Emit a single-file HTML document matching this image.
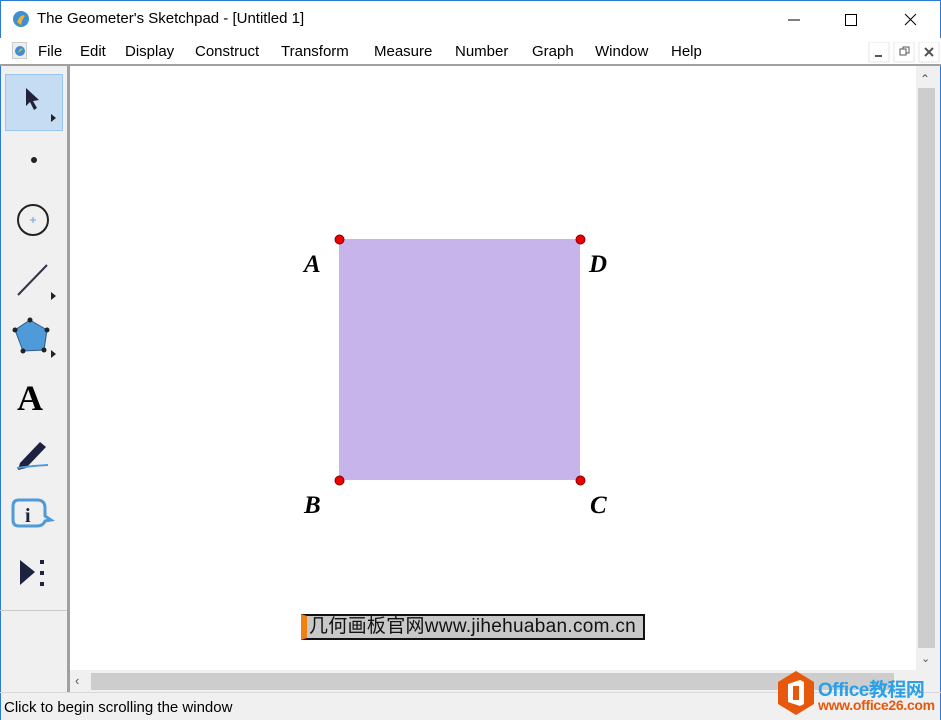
<!DOCTYPE html>
<html><head><meta charset="utf-8"><style>
*{margin:0;padding:0;box-sizing:border-box}
body{width:941px;height:720px;overflow:hidden;background:#f0f0f0;font-family:"Liberation Sans","Noto Sans CJK SC",sans-serif;position:relative}
.abs{position:absolute}
.menu span{position:absolute;top:43px;font-size:15px;color:#000}
</style></head><body>
<div class="abs" style="left:0;top:0;width:941px;height:38px;background:#fff"></div>
<div class="abs" style="left:0;top:0;width:1px;height:720px;background:#2b7bd5"></div>
<div class="abs" style="left:940px;top:0;width:1px;height:720px;background:#2b7bd5"></div>
<div class="abs" style="left:0;top:0;width:941px;height:1px;background:#2b7bd5"></div>
<svg class="abs" style="left:12px;top:10px" width="18" height="18"><circle cx="9" cy="9" r="8" fill="#3b8fd6"/><path d="M5 12 Q9 3 13 6 Q10 9 9 15Z" fill="#f2b431"/></svg>
<div class="abs" style="left:37px;top:10px;font-size:15px">The Geometer's Sketchpad - [Untitled 1]</div>
<svg class="abs" style="left:780px;top:10px" width="140" height="20" stroke="#000" fill="none" stroke-width="1"><path d="M8 10h12"/><rect x="65.5" y="4.5" width="11" height="11"/><path d="M125 4l11 11M136 4l-11 11"/></svg>
<div class="abs" style="left:0;top:38px;width:941px;height:27px;background:#fff"></div>
<svg class="abs" style="left:12px;top:42px" width="16" height="18"><rect x="0.5" y="0.5" width="14" height="16" fill="#eee" stroke="#ccc"/><circle cx="8" cy="9" r="5" fill="#3b8fd6"/><path d="M6 11 Q8 5 11 7Z" fill="#f2b431"/></svg>
<div class="menu">
<span style="left:38px">File</span><span style="left:80px">Edit</span><span style="left:125px">Display</span><span style="left:195px">Construct</span><span style="left:281px">Transform</span><span style="left:374px">Measure</span><span style="left:455px">Number</span><span style="left:532px">Graph</span><span style="left:595px">Window</span><span style="left:671px">Help</span>
</div>
<svg class="abs" style="left:868px;top:42px" width="72" height="22"><rect x="1" y="0" width="20" height="20" fill="#fff" stroke="#e6e6e6"/><rect x="26" y="0" width="20" height="20" fill="#fff" stroke="#e6e6e6"/><rect x="51" y="0" width="20" height="20" fill="#fff" stroke="#e6e6e6"/><path d="M7 14h7" stroke="#555" stroke-width="2"/><rect x="32" y="7" width="6" height="6" fill="none" stroke="#555"/><path d="M35 7V5h6v6h-3" fill="none" stroke="#555"/><path d="M57 6l8 8M65 6l-8 8" stroke="#555" stroke-width="2"/></svg>
<div class="abs" style="left:0;top:64px;width:941px;height:2px;background:#a0a0a0"></div>
<div class="abs" style="left:67px;top:66px;width:3px;height:626px;background:#a0a0a0"></div>
<div class="abs" style="left:70px;top:66px;width:846px;height:604px;background:#fff"></div>
<div class="abs" style="left:5px;top:74px;width:58px;height:57px;background:#c5dcf3;border:1px solid #99c6f0"></div>
<svg class="abs" style="left:0;top:66px" width="68" height="560">
<path d="M26 22 L26 40 L30 36 L34 44 L37 42 L33 35 L39 34Z" fill="#22223a"/><path d="M51 48l5 4-5 4z" fill="#222"/>
<circle cx="34" cy="94" r="3" fill="#222"/>
<circle cx="33" cy="154" r="15" fill="none" stroke="#222" stroke-width="2"/><path d="M30 154h6M33 151v6" stroke="#6aa6dc"/>
<path d="M18 229 L47 199" stroke="#334" stroke-width="2"/><path d="M51 226l5 4-5 4z" fill="#222"/>
<path d="M30 254 L47 264 L44 284 L23 285 L15 264Z" fill="#4f9ad8" stroke="#2a5a90"/><g fill="#222"><circle cx="30" cy="254" r="2.5"/><circle cx="47" cy="264" r="2.5"/><circle cx="44" cy="284" r="2.5"/><circle cx="23" cy="285" r="2.5"/><circle cx="15" cy="264" r="2.5"/></g><path d="M51 284l5 4-5 4z" fill="#222"/>
<text x="17" y="344" font-family="Liberation Serif" font-weight="bold" font-size="36" fill="#000">A</text>
<path d="M20 397 L40 376 L46 381 L26 402 L18 404Z" fill="#1c2240"/><path d="M17 402 Q30 400 48 399" stroke="#4f9ad8" stroke-width="2" fill="none"/>
<path d="M19 434 h18 q8 0 8 8 v8 l6 4 -6 1 q-2 5 -8 5 h-18 q-6 0 -6-6 v-14 q0-6 6-6z" fill="none" stroke="#4f9ad8" stroke-width="3"/><text x="25" y="456" font-family="Liberation Serif" font-weight="bold" font-size="20" fill="#1c2240">i</text>
<path d="M20 494 L35 506 L20 519Z" fill="#1c2240"/><g fill="#1c2240"><rect x="40" y="494" width="4" height="4"/><rect x="40" y="505" width="4" height="4"/><rect x="40" y="516" width="4" height="4"/></g>
</svg>
<div class="abs" style="left:0;top:610px;width:67px;height:1px;background:#c8c8c8"></div>
<div class="abs" style="left:339px;top:239px;width:241px;height:241px;background:#c6b4ea"></div>
<svg class="abs" style="left:0;top:0" width="941" height="720">
<g fill="#e00" stroke="#800" stroke-width="1"><circle cx="339.5" cy="239.5" r="4.5"/><circle cx="580.5" cy="239.5" r="4.5"/><circle cx="339.5" cy="480.5" r="4.5"/><circle cx="580.5" cy="480.5" r="4.5"/></g>
<g font-family="Liberation Serif" font-style="italic" font-weight="bold" font-size="25" fill="#000"><text x="304" y="272">A</text><text x="589" y="272">D</text><text x="304" y="513">B</text><text x="590" y="513">C</text></g>
</svg>
<div class="abs" style="left:301px;top:614px;width:344px;height:26px;background:#c8c8c8;border:2px solid #111;border-left:6px solid #f08010;font-size:19px;line-height:22px;padding-left:2px;white-space:nowrap;overflow:hidden;color:#111;letter-spacing:0.3px">几何画板官网www.jihehuaban.com.cn</div>
<div class="abs" style="left:916px;top:66px;width:21px;height:604px;background:#f0f0f0"></div>
<div class="abs" style="left:918px;top:88px;width:17px;height:560px;background:#cdcdcd"></div>
<div class="abs" style="left:920px;top:72px;font-size:12px;color:#555">⌃</div>
<div class="abs" style="left:921px;top:652px;font-size:11px;color:#555">⌄</div>
<div class="abs" style="left:70px;top:670px;width:846px;height:22px;background:#f0f0f0"></div>
<div class="abs" style="left:91px;top:673px;width:803px;height:17px;background:#cdcdcd"></div>
<div class="abs" style="left:75px;top:673px;font-size:13px;color:#555">‹</div>
<div class="abs" style="left:0;top:692px;width:941px;height:1px;background:#d8d8d8"></div>
<div class="abs" style="left:4px;top:699px;font-size:15px">Click to begin scrolling the window</div>
<svg class="abs" style="left:776px;top:670px" width="40" height="46"><path d="M20 1 L38 12 L38 34 L20 45 L2 34 L2 12Z" fill="#e8580c"/><path d="M12 14 L24 10 L28 12 L28 34 L24 36 L12 32Z" fill="#fff"/><rect x="17" y="16" width="6" height="14" fill="#e8580c"/></svg>
<div class="abs" style="left:818px;top:675px;font-size:19px;font-weight:bold;color:#2aa0e8;white-space:nowrap;letter-spacing:-0.5px">Office教程网</div>
<div class="abs" style="left:818px;top:697px;font-size:14px;font-weight:bold;color:#e8580c;white-space:nowrap;letter-spacing:-0.3px">www.office26.com</div>
</body></html>
